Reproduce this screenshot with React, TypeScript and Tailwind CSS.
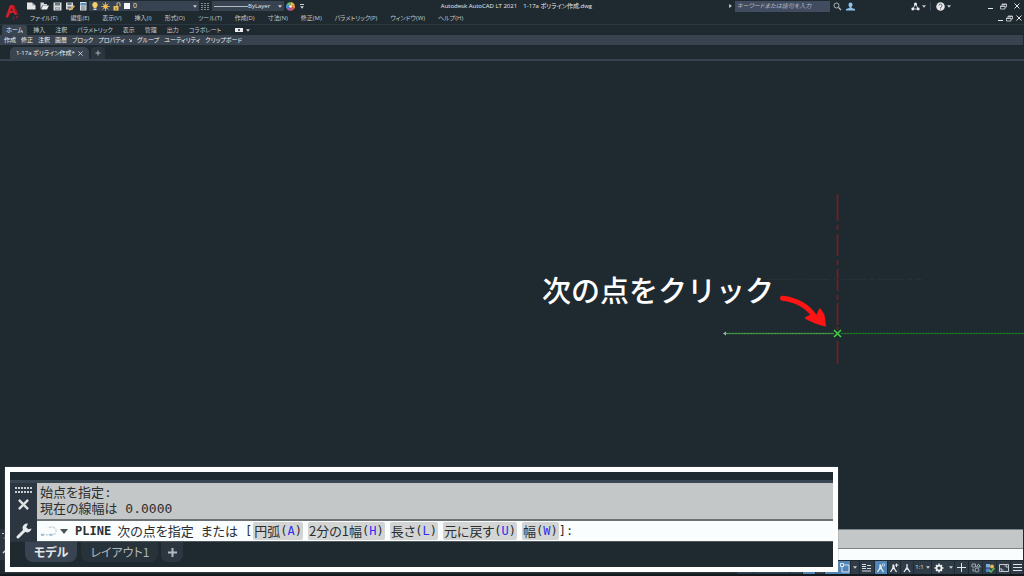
import type { ReactNode } from "react";

const menus = [
  "ファイル(F)",
  "編集(E)",
  "表示(V)",
  "挿入(I)",
  "形式(O)",
  "ツール(T)",
  "作成(D)",
  "寸法(N)",
  "修正(M)",
  "パラメトリック(P)",
  "ウィンドウ(W)",
  "ヘルプ(H)",
];

const ribbonTabs = ["挿入", "注釈", "パラメトリック", "表示", "管理", "出力", "コラボレート"];

const panelsBefore = ["作成", "修正", "注釈", "画層", "ブロック"];
const panelsAfter = ["グループ", "ユーティリティ", "クリップボード"];

const options = [
  { label: "円弧", key: "A" },
  { label: "2分の1幅", key: "H" },
  { label: "長さ", key: "L" },
  { label: "元に戻す", key: "U" },
  { label: "幅", key: "W" },
];

const history = "始点を指定:\n現在の線幅は 0.0000";

function Caret({ className = "" }: { className?: string }) {
  return (
    <svg viewBox="0 0 6 4" className={`h-[3px] w-[4px] shrink-0 ${className}`} aria-hidden="true">
      <path d="M0 0h6L3 4z" fill="#c9ced2" />
    </svg>
  );
}

function IconButton({ label, className = "", children }: { label: string; className?: string; children: ReactNode }) {
  return (
    <button type="button" aria-label={label} className={`flex shrink-0 items-center justify-center ${className}`}>
      {children}
    </button>
  );
}

function Logo() {
  return (
    <svg viewBox="0 0 28 30" className="h-[15px] w-[14px]" aria-hidden="true">
      <path d="M1 25 L9 2 Q10 0 12 0 L16 0 L25 20 L20 20 L17 15 L10 17 L6 25z" fill="#d0212b" />
      <path d="M11 12 L13 6 L16 11z" fill="#1f2930" />
      <path d="M16 0 L19 1 L27 19 L23 20z" fill="#a3131f" />
      <path d="M17 23v5h3M21.5 23h5M24 23v5.5" stroke="#b3202a" strokeWidth="1.3" fill="none" />
    </svg>
  );
}

function Minimize() {
  return (
    <svg viewBox="0 0 10 10" className="h-[7px] w-[5px]" aria-hidden="true">
      <path d="M0 9h10" stroke="#e2e5e7" strokeWidth="2" />
    </svg>
  );
}

function Restore() {
  return (
    <svg viewBox="0 0 14 14" className="h-[7px] w-[7px]" aria-hidden="true">
      <path d="M4 5V2h9v6h-3M4 3h9M1 6h9v6H1zM1 7h9" stroke="#d5d9dc" strokeWidth="1.6" fill="none" />
    </svg>
  );
}

function Close({ size = "h-[6px] w-[6px]", weight = 2 }: { size?: string; weight?: number }) {
  return (
    <svg viewBox="0 0 12 12" className={size} aria-hidden="true">
      <path d="M1 1l10 10M11 1L1 11" stroke="#dfe3e5" strokeWidth={weight} fill="none" />
    </svg>
  );
}

function QuickAccess() {
  return (
    <div className="flex items-center gap-[4px]">
      <IconButton label="新規作成" className="w-[9px]">
        <svg viewBox="0 0 18 16" className="h-[8px] w-[9px]">
          <path d="M0 1h10l7 6v8H0z" fill="#e4e6e6" />
          <path d="M10 1l1 6h6" fill="#9aa2a6" />
        </svg>
      </IconButton>
      <IconButton label="開く" className="w-[9px]">
        <svg viewBox="0 0 18 16" className="h-[8px] w-[9px]">
          <path d="M1 14V1h6l2 3h5v3H5z" fill="#cfd3d4" />
          <path d="M2 15l4-8h12l-4 8z" fill="#eceeee" />
        </svg>
      </IconButton>
      <IconButton label="上書き保存" className="w-[9px]">
        <svg viewBox="0 0 18 18" className="h-[9px] w-[9px]">
          <path d="M1 1h16v16H1z" fill="#d8dbdc" />
          <path d="M4 1h10v6H4zM4 11h10v4H4z" fill="#6a747c" />
          <path d="M5 12h8v1.500H5z" fill="#d8dbdc" />
        </svg>
      </IconButton>
      <IconButton label="名前を付けて保存" className="w-[9px]">
        <svg viewBox="0 0 18 18" className="h-[9px] w-[9px]">
          <path d="M0 1h14v14H0z" fill="#d8dbdc" />
          <path d="M3 1h8v5H3zM3 9h8v4H3z" fill="#6a747c" />
          <path d="M7 15l8-9 3 3-8 8z" fill="#e0ac53" />
          <path d="M6 17l1-3 2 2z" fill="#fff" />
        </svg>
      </IconButton>
      <IconButton label="印刷" className="w-[9px]">
        <svg viewBox="0 0 18 18" className="h-[9px] w-[9px]">
          <path d="M2 0h13v17H2z" fill="#dfe2e4" />
          <path d="M3 2h11v5H3z" fill="#5b8fc0" />
          <path d="M4 9h9v2H4zM4 13h9v2H4z" fill="#5e6a74" />
        </svg>
      </IconButton>
    </div>
  );
}

function LayerBox() {
  return (
    <div className="ml-px flex h-[10px] w-[110px] items-center gap-[3px] bg-[#384351] pl-[3px] pr-[2px]">
      <svg viewBox="0 0 12 18" className="h-[9px] w-[6px]" aria-hidden="true">
        <path d="M6 0a5.500 5.500 0 0 1 3 10v2H3v-2A5.500 5.500 0 0 1 6 0z" fill="#f6cf66" />
        <path d="M3 13h6v3H3z" fill="#d6d9da" />
      </svg>
      <svg viewBox="0 0 18 18" className="h-[9px] w-[9px]" aria-hidden="true">
        <circle cx="9" cy="9" r="4.500" fill="#f5c75a" />
        <path d="M9 0v18M0 9h18M3 3l12 12M15 3L3 15" stroke="#efb94f" strokeWidth="1.5" />
      </svg>
      <svg viewBox="0 0 16 18" className="h-[9px] w-[8px]" aria-hidden="true">
        <path d="M1 8h10v9H1z" fill="#f0c25a" />
        <path d="M8 8V4a3 3 0 0 1 6 0v5" stroke="#e8c477" strokeWidth="2" fill="none" />
        <path d="M5 11h2v4H5z" fill="#6a542a" />
      </svg>
      <span className="h-[6px] w-[6px] bg-[#f4f5f5]" />
      <select aria-label="画層" className="h-[8px] min-w-0 flex-1 appearance-none bg-transparent text-[7px] leading-[8px] text-[#e0e3e5]">
        <option>0</option>
      </select>
      <Caret />
    </div>
  );
}

function TitleBar() {
  return (
    <div className="flex h-[12px] items-center">
      <div className="flex shrink-0 items-center">
        <QuickAccess />
        <LayerBox />
        <IconButton label="線種" className="ml-[2px] w-[9px]">
          <svg viewBox="0 0 9 8" className="h-[8px] w-[9px]">
            <path d="M0 1.500h9M0 3.500h9M0 5.500h9M0 7.500h9" stroke="#7d8890" strokeWidth="1" strokeDasharray="2 1" />
          </svg>
        </IconButton>
        <div className="ml-[2px] flex h-[10px] w-[72px] items-center bg-[#384351] px-[2px]">
          <span className="h-px w-[34px] bg-[#b4babf]" />
          <select aria-label="線種の選択" className="h-[8px] min-w-0 flex-1 appearance-none bg-transparent text-[6px] leading-[8px] text-[#e0e3e5]">
            <option>ByLayer</option>
          </select>
          <Caret />
        </div>
        <IconButton label="色" className="ml-[2px] w-[9px]">
          <svg viewBox="0 0 18 18" className="h-[9px] w-[9px]">
            <path d="M9 9V0a9 9 0 0 1 8 5z" fill="#f3c33c" />
            <path d="M9 9l8-4a9 9 0 0 1 0 8z" fill="#f08a3c" />
            <path d="M9 9l8 4a9 9 0 0 1-8 5z" fill="#e4544d" />
            <path d="M9 9v9a9 9 0 0 1-8-5z" fill="#a55fc0" />
            <path d="M9 9l-8 4a9 9 0 0 1 0-8z" fill="#4a90dc" />
            <path d="M9 9L1 5a9 9 0 0 1 8-5z" fill="#67bd74" />
            <circle cx="9" cy="9" r="2.500" fill="#f2f3f3" />
          </svg>
        </IconButton>
        <IconButton label="クイック アクセスのカスタマイズ" className="ml-[4px] w-[5px] flex-col gap-px">
          <span className="h-px w-[4px] bg-[#c9ced2]" />
          <Caret />
        </IconButton>
      </div>
      <h1 className="flex-1 whitespace-pre text-center text-[6px] leading-[12px] text-[#eceeef]">
        Autodesk AutoCAD LT 2021{"    "}1-17a ポリライン作成.dwg
      </h1>
      <div className="flex shrink-0 items-center">
        <svg viewBox="0 0 4 6" className="h-[4px] w-[3px]" aria-hidden="true">
          <path d="M0 0l4 3-4 3z" fill="#d5d9dc" />
        </svg>
        <input
          type="search"
          aria-label="検索"
          placeholder="キーワードまたは語句を入力"
          className="ml-[3px] h-[11px] w-[95px] bg-[#414c60] pl-[2px] text-[6px] italic leading-[10px] placeholder:text-[#b5bbc4] placeholder:opacity-100"
        />
        <IconButton label="検索を実行" className="ml-[3px] w-[9px]">
          <svg viewBox="0 0 18 18" className="h-[9px] w-[9px]">
            <circle cx="7" cy="7" r="5" stroke="#bcc2c6" strokeWidth="1.8" fill="none" />
            <path d="M11 11l5 5" stroke="#bcc2c6" strokeWidth="2.500" />
          </svg>
        </IconButton>
        <IconButton label="サインイン" className="ml-[4px] w-[9px]">
          <svg viewBox="0 0 18 18" className="h-[9px] w-[9px]">
            <path d="M9 1a4 4 0 0 1 4 4c0 3-1 4-2 5v2l7 2v3H0v-3l7-2v-2C6 9 5 8 5 5a4 4 0 0 1 4-4z" fill="#8cc4ee" />
          </svg>
        </IconButton>
        <IconButton label="Autodesk App Store" className="ml-[56px] gap-[2px]">
          <svg viewBox="0 0 18 18" className="h-[9px] w-[9px]">
            <path d="M9 3L4 14h10z" stroke="#dfe2e4" strokeWidth="1.8" fill="none" />
            <circle cx="9" cy="4" r="3" fill="#eceeef" />
            <circle cx="3.500" cy="14" r="2.800" fill="#eceeef" />
            <circle cx="14.500" cy="14" r="2.800" fill="#eceeef" />
          </svg>
          <Caret />
        </IconButton>
        <span className="ml-[4px] h-[9px] w-px bg-[#3a4551]" />
        <IconButton label="ヘルプ" className="ml-[5px] gap-[2px]">
          <svg viewBox="0 0 18 18" className="h-[9px] w-[9px]">
            <circle cx="9" cy="9" r="8.500" fill="#e8eaeb" />
            <path d="M6 7a3 3 0 1 1 4 3l-1 2M9 13v2" stroke="#4a555f" strokeWidth="1.8" fill="none" />
          </svg>
          <Caret />
        </IconButton>
        <div className="ml-[37px] mr-[4px] flex items-center gap-[7px]">
          <IconButton label="最小化">
            <Minimize />
          </IconButton>
          <IconButton label="元に戻す">
            <Restore />
          </IconButton>
          <IconButton label="閉じる">
            <Close />
          </IconButton>
        </div>
      </div>
    </div>
  );
}

function Header() {
  return (
    <header className="text-[6px] text-[#c3c9cd]">
      <div className="flex border-b border-[#2b3742]">
        <div className="flex w-[27px] shrink-0 items-center justify-center pr-[4px]">
          <Logo />
        </div>
        <div className="min-w-0 flex-1">
          <TitleBar />
          <div className="flex h-[12px] items-center justify-between">
            <nav aria-label="メニュー" className="flex items-center gap-[13px] pl-[3px]">
              {menus.map((m) => (
                <button key={m} type="button" className="leading-[12px]">
                  {m}
                </button>
              ))}
            </nav>
            <div className="mr-[2px] flex items-center gap-[3px]">
              <IconButton label="図面を最小化">
                <Minimize />
              </IconButton>
              <IconButton label="図面を元に戻す">
                <Restore />
              </IconButton>
              <IconButton label="図面を閉じる">
                <Close />
              </IconButton>
            </div>
          </div>
        </div>
      </div>
      <nav aria-label="リボン" className="flex h-[10px] items-center gap-[6px] pl-[2px]">
        <button type="button" className="h-[10px] rounded-t-[2px] bg-[#3a4552] px-[4px] leading-[10px] text-[#f0f2f3]">
          ホーム
        </button>
        <div className="flex items-center gap-[10px] pr-[8px]">
          {ribbonTabs.map((t) => (
            <button key={t} type="button" className="leading-[10px]">
              {t}
            </button>
          ))}
        </div>
        <IconButton label="リボンを最小化" className="gap-[3px]">
          <span className="flex h-[4px] w-[8px] items-center justify-center bg-[#eceeef]">
            <span className="h-[2px] w-[2px] bg-[#4c5761]" />
          </span>
          <Caret />
        </IconButton>
      </nav>
      <div className="mr-px flex h-[10px] items-center gap-[5px] bg-[#38434f] pl-[4px] text-[#f0f2f3]">
        {panelsBefore.map((p) => (
          <button key={p} type="button" className="leading-[10px]">
            {p}
          </button>
        ))}
        <button type="button" className="flex items-center gap-[4px] leading-[10px]">
          プロパティ
          <svg viewBox="0 0 6 6" className="h-[3px] w-[3px]" aria-hidden="true">
            <path d="M0 0l5 5M5 1v4H1" stroke="#d5d9dc" strokeWidth="1.5" fill="none" />
          </svg>
        </button>
        {panelsAfter.map((p) => (
          <button key={p} type="button" className="leading-[10px]">
            {p}
          </button>
        ))}
      </div>
      <div className="flex h-[16px] items-end border-b-2 border-[#36424e] pl-[10px]">
        <div className="flex h-[12px] items-center gap-[3px] rounded-t-[5px] bg-[#38444f] px-[6px] text-[#f0f2f3]">
          <button type="button" className="leading-[12px]">
            1-17a ポリライン作成*
          </button>
          <IconButton label="タブを閉じる">
            <Close size="h-[5px] w-[5px]" />
          </IconButton>
        </div>
        <button
          type="button"
          aria-label="新しいタブ"
          className="ml-[2px] flex h-[12px] w-[14px] items-center justify-center rounded-t-[4px] bg-[#2a353e]"
        >
          <svg viewBox="0 0 12 12" className="h-[6px] w-[6px]">
            <path d="M6 1v10M1 6h10" stroke="#aab1b6" strokeWidth="2" />
          </svg>
        </button>
      </div>
    </header>
  );
}

function Canvas() {
  return (
    <main className="relative flex-1 overflow-hidden">
      <div className="absolute right-[250px] top-[210px] whitespace-nowrap text-[29px] font-medium leading-[40px] text-white [font-feature-settings:normal]">
        次の点をクリック
      </div>
      <svg viewBox="0 0 304 172" className="absolute right-0 top-[133px] h-[172px] w-[304px]" aria-hidden="true">
        <path
          d="M117.500 0V27M117.500 31v5M117.500 40v22M117.500 66v5M117.500 75v22M117.500 101v5M117.500 109v22M117.500 133v3M117.500 147v23"
          stroke="#86191e"
          strokeWidth="1.600"
        />
        <path d="M47 85.500H202" stroke="#25303c" strokeWidth="1" strokeDasharray="26 3 5 3" />
        <path d="M6 139.500H114" stroke="#2f7a35" strokeWidth="1.400" />
        <path d="M6 139.500H114" stroke="#4e9c4e" strokeWidth="1" strokeDasharray="2 1" />
        <path d="M121 139.500H304" stroke="#1b5222" strokeWidth="1.400" />
        <path d="M121 139.500H304" stroke="#1d7a26" strokeWidth="1" strokeDasharray="2 1" />
        <path d="M3 139.500l3-2v4z" fill="#a9b0b2" />
        <path d="M114 136l7 7M121 136l-7 7" stroke="#3fd544" strokeWidth="1.500" />
        <path d="M62.500 104.200C75 105.500 87 111 95 123" stroke="#fb1515" strokeWidth="5" strokeLinecap="round" fill="none" />
        <path
          d="M100 115.500L103.500 121L105 131.500L95.500 128.500L86 124L92 121L97 122z"
          fill="#fb1515"
          stroke="#fb1515"
          strokeWidth="2"
          strokeLinejoin="round"
        />
      </svg>
    </main>
  );
}

function Person({ mark }: { mark?: ReactNode }) {
  return (
    <svg viewBox="0 0 20 20" className="h-[10px] w-[10px]" aria-hidden="true">
      <path d="M8 3l2 3v4l5 8M8 3v7l-5 8M6 11h6" stroke="#e8ebed" strokeWidth="2.600" fill="none" />
      {mark}
    </svg>
  );
}

function StatusBar() {
  const cell = "h-[13px] bg-[#2f3b46]";
  return (
    <footer className="flex h-[16px] justify-end border-b-2 border-[#12181c] bg-[#1f2930] pt-px">
      <div className="flex items-center gap-px pr-px text-[6px] text-[#dfe2e4]">
        <span className={`w-[16px] ${cell}`} />
        <span className={`w-[35px] ${cell}`} />
        <span className={`w-[12px] ${cell}`} />
        <span className="h-[13px] w-[12px] bg-[#5285b8]" />
        <span className={`w-[8px] ${cell}`} />
        <IconButton label="オブジェクト スナップ" className="h-[13px] w-[25px] bg-[#5285b8]">
          <svg viewBox="0 0 20 20" className="ml-[14px] h-[10px] w-[10px]">
            <path d="M4 4h14v14H4z" stroke="#dfeaf4" strokeWidth="1.800" fill="none" />
            <path d="M1 1h6v6H1z" stroke="#fff" strokeWidth="1.600" fill="#5285b8" />
          </svg>
        </IconButton>
        <IconButton label="スナップ設定" className={`w-[8px] ${cell}`}>
          <Caret />
        </IconButton>
        <IconButton label="線の太さ" className={`w-[14px] ${cell}`}>
          <svg viewBox="0 0 10 8" className="h-[8px] w-[10px]">
            <path d="M0 .5h4M0 2.500h4M0 4.500h4M0 7h9M5 1.500h4M5 4.500h4" stroke="#d5dadd" strokeWidth="1" />
          </svg>
        </IconButton>
        <IconButton label="注釈オブジェクトを表示" className="h-[13px] w-[12px] bg-[#5285b8]">
          <Person mark={<circle cx="15" cy="4" r="2.500" stroke="#dbe8f3" strokeWidth="1.500" fill="none" />} />
        </IconButton>
        <IconButton label="注釈尺度を自動追加" className={`w-[12px] ${cell}`}>
          <Person mark={<path d="M15 1v7M12 4h7" stroke="#e8ebed" strokeWidth="2" />} />
        </IconButton>
        <IconButton label="注釈尺度" className={`w-[12px] ${cell}`}>
          <svg viewBox="0 0 20 20" className="h-[10px] w-[10px]">
            <path d="M10 2v7l-6 9M10 9l6 9M7 12h6" stroke="#e8ebed" strokeWidth="2.600" fill="none" />
          </svg>
        </IconButton>
        <button type="button" className={`flex w-[17px] items-center justify-center gap-[2px] leading-[13px] ${cell}`}>
          1:1
          <Caret />
        </button>
        <IconButton label="ワークスペースの切り替え" className={`w-[22px] gap-[5px] ${cell}`}>
          <svg viewBox="0 0 20 20" className="h-[10px] w-[10px]">
            <circle cx="10" cy="10" r="5" stroke="#eceeef" strokeWidth="3.500" fill="none" />
            <path d="M10 1v4M10 15v4M1 10h4M15 10h4M4 4l2 2M14 14l2 2M16 4l-2 2M6 14l-2 2" stroke="#eceeef" strokeWidth="3" />
          </svg>
          <Caret />
        </IconButton>
        <IconButton label="注釈モニター" className={`w-[13px] ${cell}`}>
          <svg viewBox="0 0 9 9" className="h-[9px] w-[9px]">
            <path d="M4.500 0v9M0 4.500h9" stroke="#e3e6e8" strokeWidth="1" />
          </svg>
        </IconButton>
        <IconButton label="選択表示" className={`w-[13px] ${cell}`}>
          <svg viewBox="0 0 20 20" className="h-[10px] w-[10px]">
            <path d="M2 2h7v6H2zM15 2l4 6h-8z" stroke="#c3cacf" strokeWidth="1.500" fill="none" />
            <circle cx="12" cy="14" r="4" stroke="#c3cacf" strokeWidth="1.500" fill="none" />
            <path d="M4 11v5h3" stroke="#c3cacf" strokeWidth="1.500" fill="none" />
          </svg>
        </IconButton>
        <IconButton label="グラフィックス パフォーマンス" className={`w-[13px] ${cell}`}>
          <svg viewBox="0 0 20 20" className="h-[10px] w-[10px]">
            <path d="M2 2h8v7H2z" fill="#78afe0" />
            <path d="M2 11h8v7H2z" fill="#4f87c0" />
            <circle cx="14" cy="7" r="4" fill="#e8b65a" />
            <path d="M9 14l3 4 7-8" stroke="#63b95a" strokeWidth="3" fill="none" />
          </svg>
        </IconButton>
        <IconButton label="フルスクリーン表示" className={`w-[13px] ${cell}`}>
          <svg viewBox="0 0 20 16" className="h-[8px] w-[10px]">
            <path d="M1 1h18v14H1zM11 4h5v4M9 12H4V8" stroke="#d5dadd" strokeWidth="1.800" fill="none" />
          </svg>
        </IconButton>
        <IconButton label="カスタマイズ" className={`w-[12px] ${cell}`}>
          <svg viewBox="0 0 9 9" className="h-[9px] w-[9px]">
            <path d="M0 1.500h9M0 4.500h9M0 7.500h9" stroke="#e3e6e8" strokeWidth="1" />
          </svg>
        </IconButton>
      </div>
    </footer>
  );
}

function DockedCommandLine() {
  return (
    <div className="mr-px flex">
      <div className="flex w-[12px] shrink-0 flex-col gap-[6px] bg-[#2b3641]">
        <svg viewBox="0 0 8 8" className="mt-[3px] h-[8px] w-[8px]" aria-hidden="true">
          <path d="M2 1.500h6M4 6.500l3-3" stroke="#c9ced2" strokeWidth="1" strokeDasharray="2 1" />
        </svg>
        <svg viewBox="0 0 8 8" className="h-[8px] w-[8px]" aria-hidden="true">
          <path d="M3 7l5-5" stroke="#dfe2e4" strokeWidth="1.500" />
        </svg>
      </div>
      <div className="flex-1">
        <div className="h-[20px] border-y border-y-[#7d8488] bg-[#c4c7c7]" />
        <div className="h-[11px] bg-[#fafdfe]" />
      </div>
    </div>
  );
}

function CommandWindow() {
  return (
    <section
      aria-label="コマンド ライン"
      className="absolute bottom-[4px] left-[5px] right-[186px] border-[5px] border-white bg-[#1f2930] pt-[8px] font-['Noto_Sans_CJK_JP',sans-serif] shadow-[0_0_1px_#6e777d]"
    >
      <div className="flex border-t-[3px] border-[#3a4753]">
        <div className="flex w-[27px] shrink-0 flex-col items-center bg-[#2b3641]">
          <svg viewBox="0 0 20 8" className="mt-[3px] h-[8px] w-[20px]" aria-hidden="true">
            <path d="M1 2h18M1 6h18" stroke="#c9ced2" strokeWidth="2" strokeDasharray="2 1" />
          </svg>
          <IconButton label="コマンド ラインを閉じる" className="mt-[5px]">
            <Close size="h-[11px] w-[11px]" weight={2.6} />
          </IconButton>
          <IconButton label="カスタマイズ" className="mt-[13px]">
            <svg viewBox="0 0 16 16" className="h-[16px] w-[16px]">
              <path d="M2 14l7-7" stroke="#e6e9ea" strokeWidth="3" strokeLinecap="round" />
              <path d="M12 .5a4.500 4.500 0 1 0 3.500 5l-3 .8-2.300-2z" fill="#e6e9ea" />
            </svg>
          </IconButton>
        </div>
        <div className="min-w-0 flex-1 text-[13px] text-[#2b2f31]">
          <div className="h-[38px] border-b-2 border-[#6c7274] bg-[#c4c7c7] pl-[3px] pt-[2px]">
            <p className="whitespace-pre-line font-['DejaVu_Sans_Mono','Noto_Sans_CJK_JP',monospace] leading-[16px]">
              {history}
            </p>
          </div>
          <div className="flex h-[21px] items-center whitespace-pre border-b border-[#50585c] bg-[#fafdfe] pl-[3px] leading-[18px]">
            <svg viewBox="0 0 20 12" className="h-[12px] w-[19px]" aria-hidden="true">
              <path d="M2 10h11a4 4 0 0 0 0-8H8" stroke="#cfd6da" strokeWidth="1.500" strokeDasharray="3 1" fill="none" />
              <path d="M1 9h3v2H1zM10 9h3v2h-3z" fill="#8fbede" />
            </svg>
            <svg viewBox="0 0 8 5" className="mx-[1px] h-[5px] w-[8px]" aria-hidden="true">
              <path d="M0 0h8L4 5z" fill="#4b5256" />
            </svg>
            <label htmlFor="command" className="ml-[6px] flex items-center">
              <span className="font-['DejaVu_Sans_Mono',monospace] text-[12px] font-bold">PLINE</span>
              <span className="ml-[6px]">次の点を指定</span>
              <span className="ml-[7px]">または</span>
              <span className="ml-[7px] font-['DejaVu_Sans_Mono',monospace] text-[12px]">[</span>
            </label>
            <div className="flex items-center gap-[5px] pl-px">
              {options.map((o) => (
                <button
                  key={o.key}
                  type="button"
                  className="flex h-[18px] items-center rounded-[2px] bg-[#d3d5d5] px-px leading-[18px]"
                >
                  {o.label}
                  <span className="font-['DejaVu_Sans_Mono',monospace] text-[12px]">
                    (<span className="text-[#2f2cf0]">{o.key}</span>)
                  </span>
                </button>
              ))}
            </div>
            <span className="font-['DejaVu_Sans_Mono',monospace] text-[12px]">]:</span>
            <input id="command" type="text" className="h-[18px] min-w-0 flex-1 bg-transparent outline-none" />
          </div>
        </div>
      </div>
      <nav aria-label="レイアウト" className="flex h-[25px] pl-[15px] text-[12px] text-[#b0b7bc]">
        <button type="button" className="h-[20px] rounded-b-[8px] bg-[#384451] px-[9px] font-bold leading-[20px] text-[#e3e6e8]">
          モデル
        </button>
        <button type="button" className="ml-[4px] h-[20px] rounded-b-[8px] bg-[#27323a] px-[9px] leading-[20px]">
          レイアウト1
        </button>
        <button
          type="button"
          aria-label="新しいレイアウト"
          className="ml-[3px] flex h-[20px] w-[22px] items-center justify-center rounded-b-[7px] bg-[#2b3640]"
        >
          <svg viewBox="0 0 9 9" className="h-[9px] w-[9px]">
            <path d="M4.500 0v9M0 4.500h9" stroke="#b4bbc0" strokeWidth="2" />
          </svg>
        </button>
      </nav>
    </section>
  );
}

export default function App() {
  return (
    <div className="relative flex h-screen flex-col overflow-hidden bg-[#1f2930] font-['Open_Sans','Noto_Sans_CJK_JP',sans-serif] [font-feature-settings:'palt']">
      <Header />
      <Canvas />
      <DockedCommandLine />
      <StatusBar />
      <CommandWindow />
    </div>
  );
}
